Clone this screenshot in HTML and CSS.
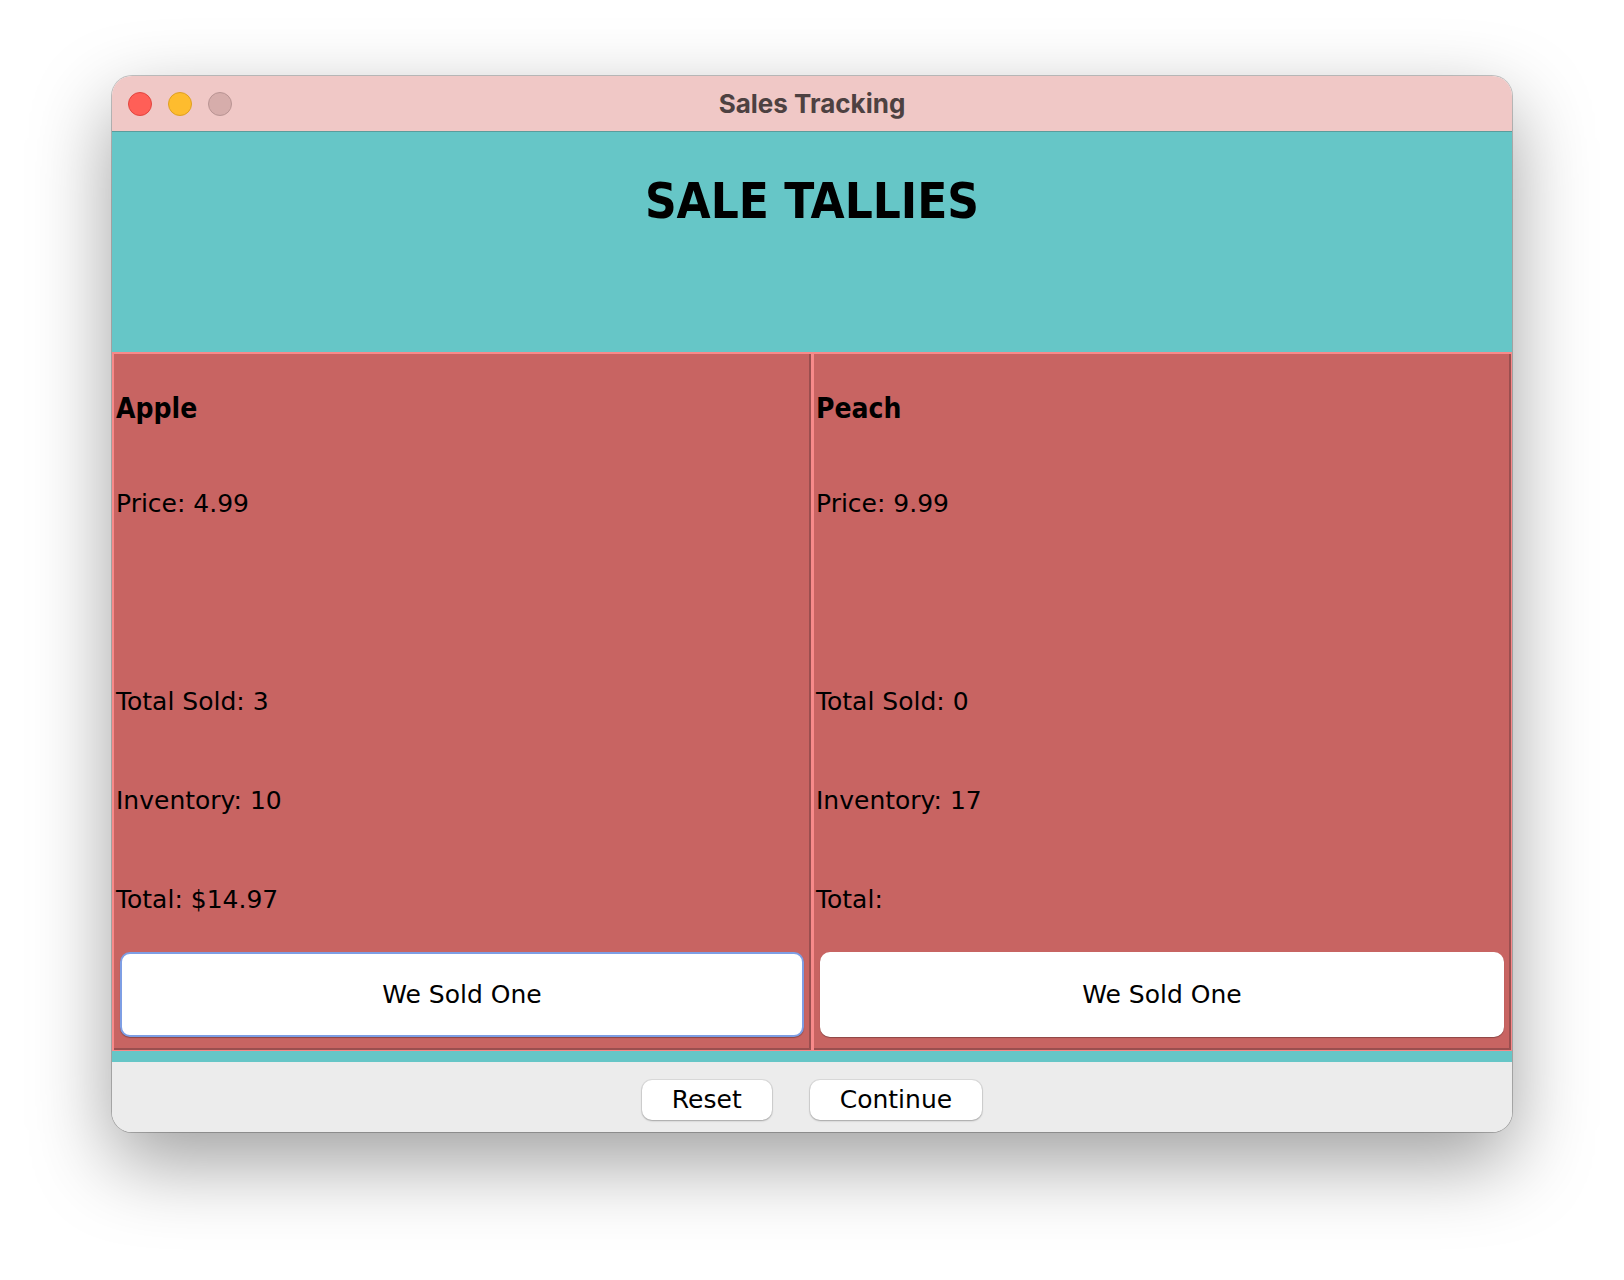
FILE: index.html
```html
<!DOCTYPE html>
<html lang="en">
<head>
    <meta charset="UTF-8">
    <meta name="viewport" content="width=device-width, initial-scale=1.0">
    <title>Sales Tracking</title>
    <link rel="stylesheet" href="styles.css">
</head>
<body>
    <div class="window">
        <div class="titlebar">
            <div class="lights">
                <span class="light close"></span>
                <span class="light minimize"></span>
                <span class="light zoom"></span>
            </div>
            <div class="title">Sales Tracking</div>
            <div></div>
        </div>

        <div class="header">
            <h1>SALE TALLIES</h1>
        </div>

        <div class="panels">
            <div class="panel">
                <div class="row name">Apple</div>
                <div class="row">Price: 4.99</div>
                <div class="row"></div>
                <div class="row">Total Sold: 3</div>
                <div class="row">Inventory: 10</div>
                <div class="row">Total: $14.97</div>
                <div class="row btn-row">
                    <button type="button" class="sold focused">We Sold One</button>
                </div>
            </div>
            <div class="panel">
                <div class="row name">Peach</div>
                <div class="row">Price: 9.99</div>
                <div class="row"></div>
                <div class="row">Total Sold: 0</div>
                <div class="row">Inventory: 17</div>
                <div class="row">Total:</div>
                <div class="row btn-row">
                    <button type="button" class="sold">We Sold One</button>
                </div>
            </div>
        </div>

        <div class="strip"></div>

        <div class="footer">
            <button type="button" class="action">Reset</button>
            <button type="button" class="action">Continue</button>
        </div>
    </div>
</body>
</html>
```

FILE: styles.css
```css
html {
    background-color: #fff;
}

body {
    margin: 0;
    padding: 76px 0 148px 112px;
    background-color: #fff;
    font-family: "DejaVu Sans", Verdana, sans-serif;
}

.window {
    width: 1400px;
    height: 1056px;
    border-radius: 20px;
    overflow: hidden;
    display: flex;
    flex-direction: column;
    box-shadow: 0 0 0 1px rgba(0, 0, 0, 0.22), 0 30px 80px rgba(0, 0, 0, 0.38);
}

.titlebar {
    height: 55px;
    flex: none;
    background-color: #f0c8c6;
    border-bottom: 1px solid #5a9c9c;
    display: grid;
    grid-template-columns: 1fr auto 1fr;
    align-items: center;
}

.lights {
    display: flex;
    gap: 16px;
    padding-left: 16px;
}

.light {
    width: 22px;
    height: 22px;
    border-radius: 50%;
    border: 1px solid;
}

.close {
    background-color: #ff5f57;
    border-color: #e1453f;
}

.minimize {
    background-color: #febc2e;
    border-color: #de9f22;
}

.zoom {
    background-color: #d6adab;
    border-color: #b89493;
}

.title {
    font-family: Inter, "Liberation Sans", sans-serif;
    font-weight: 700;
    font-size: 26px;
    color: #4d4141;
}

.header {
    height: 220px;
    flex: none;
    background-color: #66c6c7;
    text-align: center;
}

.header h1 {
    margin: 0;
    padding-top: 41px;
    font-size: 49px;
    font-weight: bold;
    font-stretch: semi-condensed;
    color: #000;
}

.panels {
    height: 699px;
    flex: none;
    background-color: #c86462;
    display: grid;
    grid-template-columns: 1fr 1fr;
}

.panel {
    display: grid;
    grid-template-rows: repeat(7, 1fr);
    border: 1px solid #f78a8a;
    box-shadow: inset 1px 1px 0 #f78a8a, inset -2px -2px 0 #9a4f4f;
    padding: 2px 3px 2px 3px;
}

.row {
    display: flex;
    align-items: center;
    font-size: 25px;
    color: #000;
}

.row.name {
    font-weight: bold;
    font-size: 28px;
    font-stretch: semi-condensed;
    padding-top: 8px;
}

.btn-row {
    align-items: stretch;
    padding: 3px 4px 11px 4px;
}

.sold {
    width: 100%;
    background-color: #fff;
    border: 2px solid #fff;
    border-radius: 10px;
    font-family: "DejaVu Sans", Verdana, sans-serif;
    font-size: 25px;
    color: #000;
    box-shadow: 0 1px 1px rgba(0, 0, 0, 0.3);
    cursor: pointer;
}

.sold.focused {
    border-color: #7e9ee4;
}

.strip {
    height: 11px;
    flex: none;
    background-color: #66c6c7;
}

.footer {
    flex: 1;
    background-color: #ececec;
    display: flex;
    justify-content: center;
    align-items: center;
    gap: 38px;
    padding-top: 5px;
}

.action {
    height: 40px;
    padding: 0 30px;
    background-color: #fff;
    border: none;
    border-radius: 10px;
    font-family: "DejaVu Sans", Verdana, sans-serif;
    font-size: 25px;
    color: #000;
    box-shadow: 0 0 0 1px rgba(0, 0, 0, 0.07), 0 1px 2px rgba(0, 0, 0, 0.25);
    cursor: pointer;
}
```
